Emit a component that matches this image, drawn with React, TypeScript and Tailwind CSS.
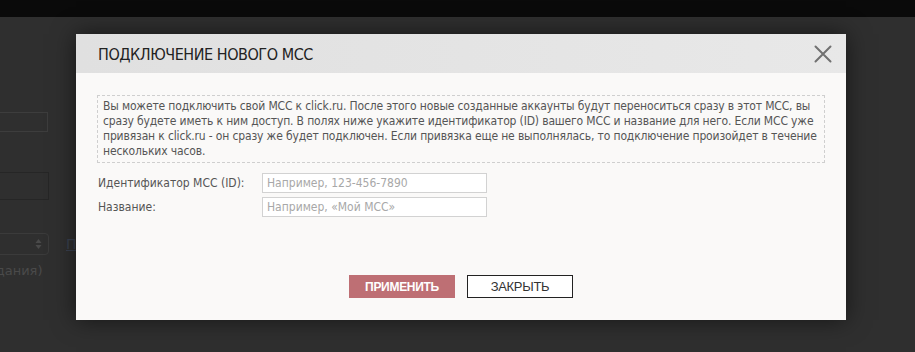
export default function App() {
  return (
    <div className="relative w-[915px] h-[352px] overflow-hidden bg-[#2f2f2f] font-['DejaVu_Sans',sans-serif]">
      {/* top bar */}
      <div className="h-[17px] bg-[#0a0a0a]" />

      {/* page behind the overlay */}
      <div className="-ml-[100px] pt-[95px] w-[300px] text-[#5a5a5a] text-[13px]">
        <div className="h-[20px] w-[148px] border border-[#3d3d3d]" />
        <div className="mt-[40px] h-[28px] w-[149px] border border-[#262626]" />
        <div className="mt-[33px] flex items-center gap-[17px]">
          <div className="h-[22px] w-[149px] rounded-[4px] border border-[#3b3b3b] flex justify-end items-center pr-[6px]">
            <svg width="7" height="12" viewBox="0 0 7 12">
              <path d="M3.5 1 L6.5 5 H0.5 Z M3.5 11 L0.5 7 H6.5 Z" fill="#4a4a4a" />
            </svg>
          </div>
          <span className="underline text-[#3a4150] text-[14px]">П</span>
        </div>
        <div className="mt-[6px] pl-[32px] text-[#4a4a4a]">(дата создания)</div>
      </div>

      {/* modal */}
      <div className="absolute left-[76px] top-[34px] w-[770px] h-[286px] bg-[#faf9f8] shadow-[0_0_22px_rgba(0,0,0,0.55)] flex flex-col">
        <div className="h-[39px] shrink-0 bg-gradient-to-r from-[#e0e0e0] to-[#e8e8e8] flex items-center justify-between pl-[22px] pr-[14px]">
          <h2 className="font-stretch-condensed text-[16px] text-[#222] tracking-[-0.45px] pt-[3px]">
            ПОДКЛЮЧЕНИЕ НОВОГО МСС
          </h2>
          <svg width="18" height="18" viewBox="0 0 18 18" className="mt-[1px]">
            <path d="M1.5 1.5 L16.5 16.5 M16.5 1.5 L1.5 16.5" stroke="#717171" strokeWidth="2" strokeLinecap="round" />
          </svg>
        </div>

        <div className="px-[21px] pt-[22px] font-stretch-condensed">
          <p className="border border-dashed border-[#cfcfcf] px-[5px] pt-[3px] pb-[3px] text-[12px] leading-[15px] tracking-[-0.15px] text-[#555]">
            Вы можете подключить свой МСС к click.ru. После этого новые созданные аккаунты будут переноситься сразу в этот МСС, вы сразу будете иметь к ним доступ. В полях ниже укажите идентификатор (ID) вашего МСС и название для него. Если МСС уже привязан к click.ru - он сразу же будет подключен. Если привязка еще не выполнялась, то подключение произойдет в течение нескольких часов.
          </p>

          <div className="mt-[10px] flex flex-col gap-[4px] text-[12px] text-[#555]">
            <div className="flex items-center">
              <label className="w-[165px] pl-[1px]">Идентификатор МСС (ID):</label>
              <input
                placeholder="Например, 123-456-7890"
                className="w-[225px] h-[20px] border border-[#d2d2d2] bg-white px-[4px] text-[12px] placeholder:text-[#a8a8a8] outline-none"
              />
            </div>
            <div className="flex items-center">
              <label className="w-[165px] pl-[1px]">Название:</label>
              <input
                placeholder="Например, «Мой МСС»"
                className="w-[225px] h-[20px] border border-[#d2d2d2] bg-white px-[4px] text-[12px] placeholder:text-[#a8a8a8] outline-none"
              />
            </div>
          </div>
        </div>

        <div className="mt-auto mb-[22px] flex justify-center gap-[12px]">
          <button className="w-[106px] h-[23px] bg-[#be6f74] text-white text-[12px] font-bold font-['Liberation_Sans',sans-serif] tracking-[-0.3px]">
            ПРИМЕНИТЬ
          </button>
          <button className="w-[106px] h-[23px] border border-[#222] bg-white text-[#333] text-[13px] font-['Liberation_Sans',sans-serif] tracking-[-0.3px]">
            ЗАКРЫТЬ
          </button>
        </div>
      </div>
    </div>
  )
}
